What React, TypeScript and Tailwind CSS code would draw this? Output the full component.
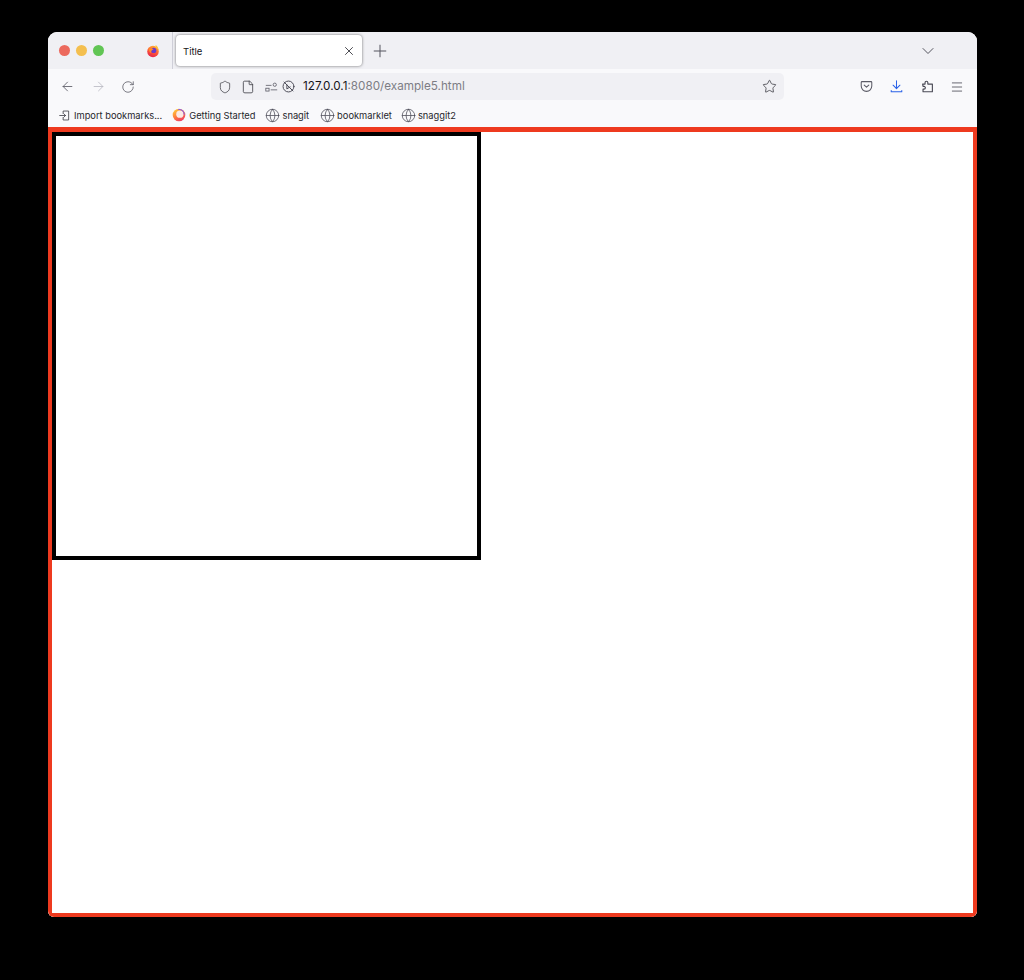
import { ArrowLeft, ArrowRight, ChevronDown, File, Globe, Menu, Plus, RotateCw, Shield, Star, X } from "lucide-react";

/* ── Firefox logo, tab strip version ─── */
function FirefoxLogo({ className }: { className?: string }) {
  return (
    <svg viewBox="0 0 16 16" className={className}>
      <defs>
        <linearGradient id="fx" x1="0.7" y1="0" x2="0.3" y2="1">
          <stop offset="0" stopColor="#ffb52e" />
          <stop offset="0.5" stopColor="#ff5a36" />
          <stop offset="1" stopColor="#e3214f" />
        </linearGradient>
      </defs>
      <circle cx="8" cy="8.600" r="6.600" fill="url(#fx)" />
      <circle cx="8.800" cy="7.400" r="3" fill="#6a3bc9" />
      <path d="M11 1.200c2.400 1.400 3.600 3.800 3.300 6.400-.8-2-1.800-3-3.300-3.600z" fill="#ffc23a" />
      <path d="M3 4.500c1.300 1 3 .6 4-.5-.2 2 1 2 1.800 2.400-2.300.4-3.600 1.800-2.800 4-1.600-.6-3.400-3-3-5.900z" fill="#ff8a2c" />
    </svg>
  );
}

/* ── Firefox logo, bookmarks version: pale centre, open ring ─── */
function GettingStartedLogo() {
  return (
    <svg viewBox="0 0 16 16" className="w-[14px] h-[14px]">
      <defs>
        <linearGradient id="fxb" x1="0.2" y1="0.1" x2="0.7" y2="1">
          <stop offset="0" stopColor="#ffc23a" />
          <stop offset="0.5" stopColor="#ff7a3c" />
          <stop offset="1" stopColor="#ec3a68" />
        </linearGradient>
      </defs>
      <circle cx="8" cy="8" r="7.200" fill="url(#fxb)" />
      <circle cx="9" cy="7" r="4.200" fill="#fbe9e4" />
      <path d="M7 1.200a6.400 6.400 0 0 1 7.600 6.600l-1.300-.2a5 5 0 0 0-6-5.200z" fill="#8f5be0" />
    </svg>
  );
}

function PocketIcon() {
  return (
    <svg viewBox="0 0 16 16" fill="none" stroke="#5b5b66" strokeWidth="1.300" strokeLinecap="round" strokeLinejoin="round" className="w-[13px] h-[13px]">
      <path d="M2.500 2h11c.6 0 1 .4 1 1v4.500c0 3.600-2.900 6.500-6.500 6.500s-6.500-2.900-6.500-6.500V3c0-.6.4-1 1-1z" />
      <path d="M5.200 6.200 8 8.800l2.800-2.600" />
    </svg>
  );
}

function DownloadIcon() {
  return (
    <svg viewBox="0 0 16 16" fill="none" stroke="#2a62e8" strokeWidth="1.300" strokeLinecap="round" strokeLinejoin="round" className="w-[13px] h-[13px]">
      <path d="M8 1v9.500M3.800 6.400 8 10.600l4.200-4.200M1.500 13v1.500h13V13" />
    </svg>
  );
}

function ExtensionIcon() {
  return (
    <svg viewBox="0 0 16 16" fill="none" stroke="#4a4a55" strokeWidth="1.400" strokeLinejoin="round" className="w-[13px] h-[13px]">
      <path d="M2 5h3V3.200a1.700 1.700 0 0 1 3.400 0V5H14v9.500H2.500v-3.200h1.200a1.700 1.700 0 0 0 0-3.400H2.500z" />
    </svg>
  );
}

function PermissionsIcon() {
  return (
    <svg viewBox="0 0 16 12" fill="none" stroke="#5b5b66" strokeWidth="1" className="w-[13px] h-[10px]">
      <path d="M1 4h7M7 9.500h8" />
      <circle cx="12" cy="3.200" r="2" />
      <rect x="1" y="7.500" width="4" height="3.500" />
    </svg>
  );
}

function AutoplayBlockedIcon() {
  return (
    <svg viewBox="0 0 16 16" fill="none" stroke="#4a4a55" strokeWidth="1.200" strokeLinecap="round" strokeLinejoin="round" className="w-[13px] h-[13px]">
      <circle cx="8" cy="8" r="6.700" />
      <path d="M2.500 2.500 13.500 13.500" />
      <path d="M6 6v5l4-2.500" />
    </svg>
  );
}

function ImportIcon() {
  return (
    <svg viewBox="0 0 16 16" fill="none" stroke="#3f3f46" strokeWidth="1.200" strokeLinecap="round" strokeLinejoin="round" className="w-[11px] h-[11px]">
      <path d="M6 5V1.500h8v13H6V11M1 8h8.500M7 5.500 9.500 8 7 10.500" />
    </svg>
  );
}

function Bookmark({ icon, label, className }: { icon: React.ReactNode; label: string; className?: string }) {
  return (
    <div className={`flex items-center ${className ?? ""}`}>
      {icon}
      <span className="pt-[1px] text-[9.300px] leading-none text-[#26262b] whitespace-nowrap">{label}</span>
    </div>
  );
}

export default function App() {
  const globe = <Globe className="w-[15px] h-[15px] text-[#4a4a55]" strokeWidth={1.200} />;

  return (
    <div className="min-h-[980px] bg-black pt-[32px] pl-[48px] font-['Inter','Liberation_Sans',sans-serif]">
      <div className="w-[929px] h-[885px] rounded-t-[9px] rounded-b-[6px] overflow-hidden flex flex-col bg-white">
        {/* Tab strip */}
        <div className="h-[37px] shrink-0 bg-[#f0f0f4] flex items-center">
          <div className="flex items-center gap-[6px] pl-[11px]">
            <span className="w-[11px] h-[11px] rounded-full bg-[#ec6a5e]" />
            <span className="w-[11px] h-[11px] rounded-full bg-[#f4bf4f]" />
            <span className="w-[11px] h-[11px] rounded-full bg-[#61c554]" />
          </div>
          <FirefoxLogo className="w-[14px] h-[14px] ml-[42px]" />
          <div className="w-px h-[37px] bg-[#cfcfd8] ml-[12px]" />
          <div className="w-[186px] h-[31px] ml-[3px] bg-white rounded-[4px] shadow-[0_0_3px_rgba(0,0,0,0.55)] flex items-center justify-between pl-[7px] pr-[6px]">
            <span className="pt-[3px] text-[9.500px] text-[#15141a]">Title</span>
            <X className="w-[14px] h-[14px] text-[#3f3f46]" strokeWidth={1.600} />
          </div>
          <Plus className="w-[20px] h-[20px] ml-[8px] text-[#55555f]" strokeWidth={1.200} />
          <ChevronDown className="w-[20px] h-[20px] ml-[528px] text-[#55555f]" strokeWidth={1.200} />
        </div>

        {/* Nav toolbar */}
        <div className="h-[35px] shrink-0 bg-[#f9f9fb] flex items-center pl-[12px]">
          <ArrowLeft className="w-[15px] h-[15px] text-[#55555f]" strokeWidth={1.300} />
          <ArrowRight className="w-[15px] h-[15px] ml-[16px] text-[#b8b8c0]" strokeWidth={1.300} />
          <RotateCw className="w-[14px] h-[14px] ml-[15px] text-[#55555f]" strokeWidth={1.300} />
          <div className="w-[573px] h-[27px] ml-[76px] bg-[#f0f0f4] rounded-[5px] flex items-center pl-[7px] pr-[7px]">
            <Shield className="w-[14px] h-[14px] text-[#3f3f46]" strokeWidth={1.300} />
            <File className="w-[14px] h-[14px] ml-[9px] text-[#3f3f46]" strokeWidth={1.400} />
            <div className="ml-[10px]"><PermissionsIcon /></div>
            <div className="ml-[4px]"><AutoplayBlockedIcon /></div>
            <span className="ml-[8px] pt-[1px] text-[11.700px] leading-none text-[#15141a] whitespace-nowrap">
              127.0.0.1<span className="text-[#7d7d85]">:8080/example5.html</span>
            </span>
            <Star className="w-[15px] h-[15px] ml-auto text-[#3f3f46]" strokeWidth={1.300} />
          </div>
          <div className="ml-[76px]"><PocketIcon /></div>
          <div className="ml-[17px]"><DownloadIcon /></div>
          <div className="ml-[18px]"><ExtensionIcon /></div>
          <Menu className="w-[14px] h-[14px] ml-[16px] text-[#55555f]" strokeWidth={1.500} />
        </div>

        {/* Bookmarks bar */}
        <div className="h-[23px] shrink-0 bg-[#f9f9fb] flex items-center pl-[11px] pb-[1px]">
          <Bookmark className="gap-[4px]" icon={<ImportIcon />} label="Import bookmarks..." />
          <Bookmark className="ml-[10px] gap-[3px]" icon={<GettingStartedLogo />} label="Getting Started" />
          <Bookmark className="ml-[10px] gap-[2px]" icon={globe} label="snagit" />
          <Bookmark className="ml-[11px] gap-[2px]" icon={globe} label="bookmarklet" />
          <Bookmark className="ml-[9px] gap-[2px]" icon={globe} label="snaggit2" />
        </div>

        {/* Page viewport */}
        <div className="flex-1 border-x-[4px] border-b-[4px] border-t-[5px] border-[#ee3a1f] bg-white">
          <div className="w-[429px] h-[428px] border-[4px] border-black bg-white" />
        </div>
      </div>
    </div>
  );
}
